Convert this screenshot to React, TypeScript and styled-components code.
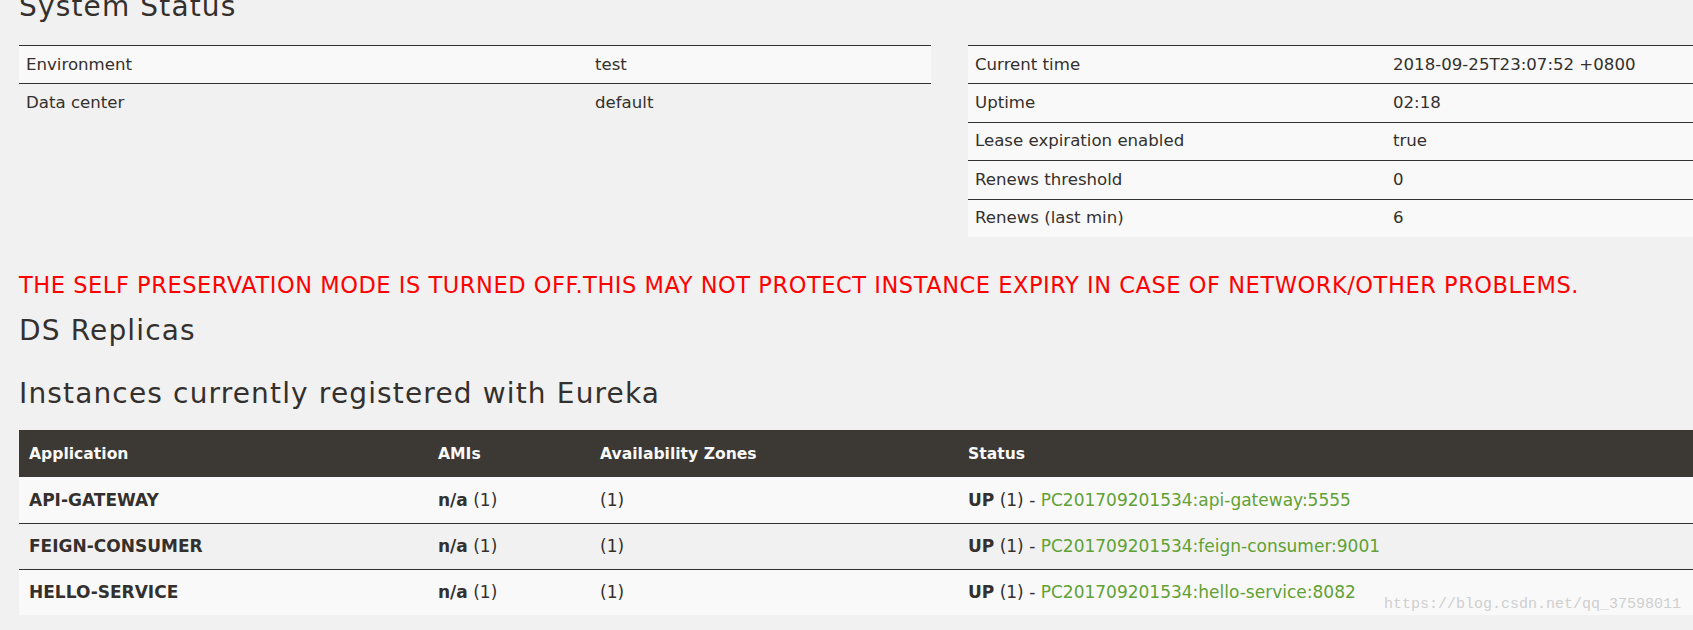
import { FC } from "react";
import styled, { createGlobalStyle } from "styled-components";

const GlobalStyle = createGlobalStyle`
  html, body {
    margin: 0;
    padding: 0;
    background: #f1f1f1;
  }

  body {
    font-family: "DejaVu Sans", "Open Sans", sans-serif;
    color: #34302d;
    overflow: hidden;
  }
`;

type StatusItem = { label: string; value: string };

const envInfo: StatusItem[] = [
  { label: "Environment", value: "test" },
  { label: "Data center", value: "default" },
];

const timeInfo: StatusItem[] = [
  { label: "Current time", value: "2018-09-25T23:07:52 +0800" },
  { label: "Uptime", value: "02:18" },
  { label: "Lease expiration enabled", value: "true" },
  { label: "Renews threshold", value: "0" },
  { label: "Renews (last min)", value: "6" },
];

const instances = [
  { app: "API-GATEWAY", id: "PC201709201534:api-gateway:5555" },
  { app: "FEIGN-CONSUMER", id: "PC201709201534:feign-consumer:9001" },
  { app: "HELLO-SERVICE", id: "PC201709201534:hello-service:8082" },
];

const StatusTable: FC<{ items: StatusItem[]; cols: string; allShaded?: boolean }> = ({
  items,
  cols,
  allShaded,
}) => (
  <StatusList>
    {items.map((item, i) => (
      <StatusRow key={item.label} $cols={cols} $shaded={allShaded || i % 2 === 0}>
        <StatusCell>{item.label}</StatusCell>
        <StatusCell>{item.value}</StatusCell>
      </StatusRow>
    ))}
  </StatusList>
);

const App: FC = () => (
  <Frame>
    <GlobalStyle />

    <Title>System Status</Title>

    <StatusGrid>
      <StatusTable items={envInfo} cols="569px 1fr" />
      <StatusTable items={timeInfo} cols="418px 1fr" allShaded />
    </StatusGrid>

    <Warning>
      THE SELF PRESERVATION MODE IS TURNED OFF.THIS MAY NOT PROTECT INSTANCE EXPIRY IN CASE OF
      NETWORK/OTHER PROBLEMS.
    </Warning>

    <Heading $gap={20.5}>DS Replicas</Heading>
    <Heading $gap={34.5}>Instances currently registered with Eureka</Heading>

    <InstanceTable>
      <HeaderRow>
        <HeadCell>Application</HeadCell>
        <HeadCell>AMIs</HeadCell>
        <HeadCell>Availability Zones</HeadCell>
        <HeadCell>Status</HeadCell>
      </HeaderRow>

      {instances.map((row, i) => (
        <InstanceRow key={row.app} $shaded={i % 2 === 0} $first={i === 0}>
          <BodyCell>
            <b>{row.app}</b>
          </BodyCell>
          <BodyCell>
            <b>n/a</b> (1)
          </BodyCell>
          <BodyCell>(1)</BodyCell>
          <BodyCell>
            <b>UP</b> (1) - <InstanceLink href="#">{row.id}</InstanceLink>
          </BodyCell>
        </InstanceRow>
      ))}
    </InstanceTable>

    <Watermark>https://blog.csdn.net/qq_37598011</Watermark>
  </Frame>
);

export default App;

const Frame = styled.div`
  position: relative;
  width: 1861px;
  height: 630px;
  padding-left: 19px;
`;

const Title = styled.h2`
  margin: -6.7px 0 23.7px;
  font-size: 28px;
  line-height: 28px;
  font-weight: 400;
  letter-spacing: 1.15px;
  white-space: nowrap;
`;

const StatusGrid = styled.div`
  display: grid;
  grid-template-columns: 912px 912px;
  column-gap: 37px;
  align-items: start;
`;

const StatusList = styled.div`
  display: flex;
  flex-direction: column;
`;

const StatusRow = styled.div<{ $cols: string; $shaded: boolean }>`
  display: grid;
  grid-template-columns: ${(p) => p.$cols};
  align-items: center;
  box-sizing: border-box;
  height: 38.4px;
  border-top: 1px solid #34302d;
  background: ${(p) => (p.$shaded ? "#f9f9f9" : "transparent")};
`;

const StatusCell = styled.div`
  padding: 0 7px;
  font-size: 16.6px;
  line-height: 22px;
  white-space: nowrap;
`;

const Warning = styled.div`
  margin-top: 37.5px;
  font-size: 22.5px;
  line-height: 22.5px;
  letter-spacing: 0.55px;
  color: #ff0000;
  white-space: nowrap;
`;

const Heading = styled.h3<{ $gap: number }>`
  margin: ${(p) => p.$gap}px 0 0;
  font-size: 28px;
  line-height: 28px;
  font-weight: 400;
  letter-spacing: 1.15px;
  white-space: nowrap;
`;

const InstanceTable = styled.div`
  margin-top: 22.5px;
  display: flex;
  flex-direction: column;
`;

const columns = "409px 162px 368px 1fr";

const HeaderRow = styled.div`
  display: grid;
  grid-template-columns: ${columns};
  align-items: center;
  height: 46.7px;
  background: #3c3834;
  color: #f9f9f9;
`;

const HeadCell = styled.div`
  padding: 0 10px;
  font-size: 15.6px;
  font-weight: 700;
  white-space: nowrap;
`;

const InstanceRow = styled.div<{ $shaded: boolean; $first: boolean }>`
  display: grid;
  grid-template-columns: ${columns};
  align-items: center;
  box-sizing: border-box;
  height: 45.8px;
  border-top: ${(p) => (p.$first ? "none" : "1px solid #34302d")};
  background: ${(p) => (p.$shaded ? "#f9f9f9" : "#f1f1f1")};
`;

const BodyCell = styled.div`
  padding: 0 10px;
  font-size: 17px;
  line-height: 22px;
  white-space: nowrap;

  b {
    font-weight: 700;
  }
`;

const InstanceLink = styled.a`
  color: #5fa134;
  text-decoration: none;
`;

const Watermark = styled.div`
  position: absolute;
  left: 1384px;
  top: 603.5px;
  font-family: "Liberation Mono", monospace;
  font-size: 15px;
  line-height: 1;
  color: #cfcfcf;
  white-space: nowrap;
`;
